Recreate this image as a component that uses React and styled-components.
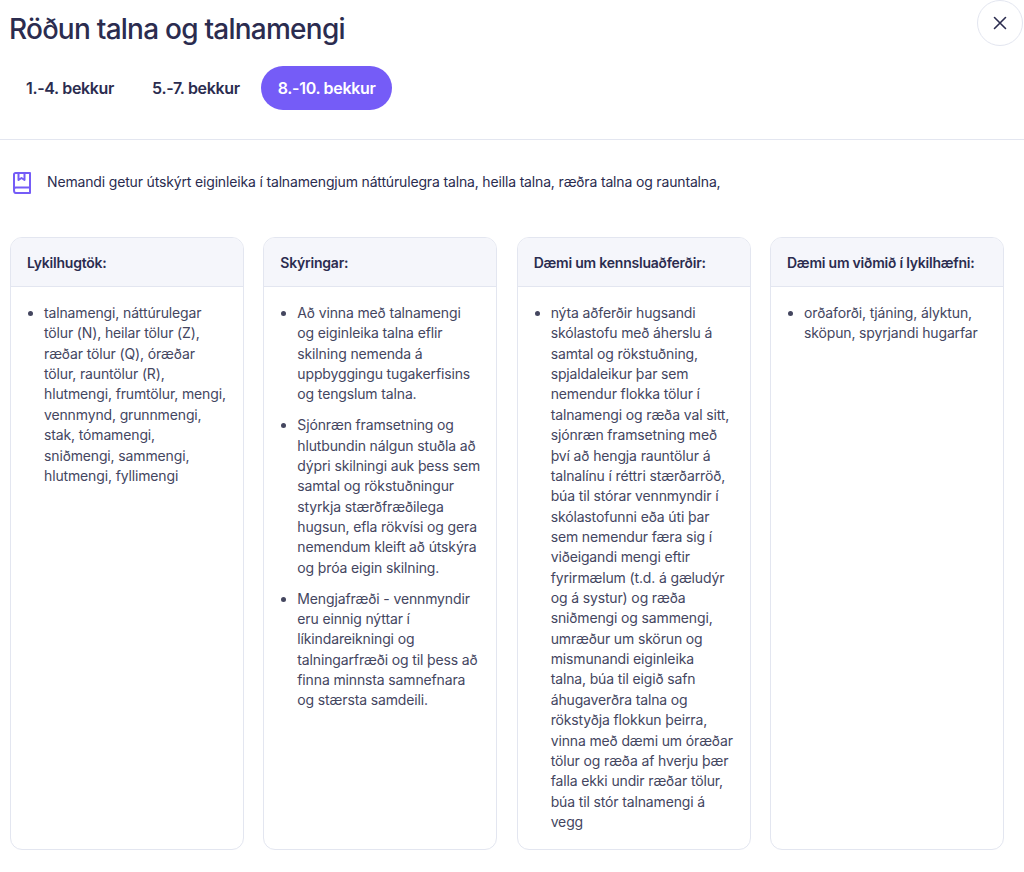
import React from 'react'
import styled, { createGlobalStyle } from 'styled-components'

const ink = '#2b2c4f'
const body = '#44465f'
const line = '#e3e6f0'
const purple = '#755cf7'

const GlobalStyle = createGlobalStyle`
    html, body { margin: 0; padding: 0; background: #fff; }
    body { font-family: Inter, "Liberation Sans", sans-serif; color: ${ink}; }
`

const Page = styled.div`
    width: 1024px;
    height: 872px;
    overflow: hidden;
    position: relative;
`

const Header = styled.header`
    height: 140px;
    padding: 11px 0 0 9px;
    box-sizing: border-box;
    border-bottom: 1px solid ${line};
`

const Title = styled.h1`
    margin: 0;
    font-size: 28px;
    line-height: 36px;
    font-weight: 500;
    letter-spacing: -0.76px;
    color: ${ink};
`

const Tabs = styled.div`
    display: flex;
    margin-top: 19px;
`

const Tab = styled.button`
    height: 44px;
    padding: 0 17px;
    margin-right: ${props => props.$active ? 0 : '4px'};
    border: 0;
    border-radius: 22px;
    font-family: Inter, sans-serif;
    font-size: 16px;
    font-weight: 600;
    letter-spacing: -0.33px;
    color: ${props => props.$active ? '#fff' : ink};
    background: ${props => props.$active ? purple : 'transparent'};
`

const CloseButton = styled.button`
    position: absolute;
    top: 0;
    left: 977px;
    width: 46px;
    height: 46px;
    display: flex;
    align-items: center;
    justify-content: center;
    padding: 0;
    border: 1px solid ${line};
    border-radius: 50%;
    background: #fff;
    color: ${ink};
`

const Intro = styled.div`
    display: flex;
    gap: 15px;
    padding: 29px 0 0 12px;
    font-size: 14px;
    line-height: 26px;
    letter-spacing: -0.16px;
    color: ${ink};
`

const IconBox = styled.svg`
    margin-top: 2px;
    flex: none;
`

const Columns = styled.div`
    display: grid;
    grid-template-columns: repeat(4, 234px);
    column-gap: 19.33px;
    padding: 42px 0 0 10px;
`

const Column = styled.section`
    height: 613px;
    box-sizing: border-box;
    border: 1px solid ${line};
    border-radius: 12px;
    overflow: hidden;
`

const ColumnTitle = styled.h2`
    margin: 0;
    height: 49px;
    box-sizing: border-box;
    padding: 0 16px;
    display: flex;
    align-items: center;
    font-size: 14px;
    font-weight: 600;
    letter-spacing: -0.22px;
    color: ${ink};
    background: #f5f6fb;
    border-bottom: 1px solid ${line};
`

const List = styled.ul`
    margin: 0;
    padding: 16px 16px 0 33px;
    font-size: 14px;
    line-height: 20.36px;
    letter-spacing: -0.14px;
    color: ${body};
`

const Item = styled.li`
    margin-bottom: 10.5px;
`

const columns = [
    {
        title: 'Lykilhugtök:',
        items: ['talnamengi, náttúrulegar tölur (N), heilar tölur (Z), ræðar tölur (Q), óræðar tölur, rauntölur (R), hlutmengi, frumtölur, mengi, vennmynd, grunnmengi, stak, tómamengi, sniðmengi, sammengi, hlutmengi, fyllimengi'],
    },
    {
        title: 'Skýringar:',
        items: [
            'Að vinna með talnamengi og eiginleika talna eflir skilning nemenda á uppbyggingu tugakerfisins og tengslum talna.',
            'Sjónræn framsetning og hlutbundin nálgun stuðla að dýpri skilningi auk þess sem samtal og rökstuðningur styrkja stærðfræðilega hugsun, efla rökvísi og gera nemendum kleift að útskýra og þróa eigin skilning.',
            'Mengjafræði - vennmyndir eru einnig nýttar í líkindareikningi og talningarfræði og til þess að finna minnsta samnefnara og stærsta samdeili.',
        ],
    },
    {
        title: 'Dæmi um kennsluaðferðir:',
        items: [
            <>nýta aðferðir hugsandi skólastofu með áherslu á samtal og rökstuðning, spjaldaleikur þar sem nemendur flokka tölur í talnamengi og ræða val sitt, sjónræn framsetning með því að hengja rauntölur á talnalínu í réttri stærðarröð, búa til stórar vennmyndir í skólastofunni eða úti þar sem nemendur færa sig í viðeigandi mengi eftir fyrirmælum (t.d. á gæludýr og á systur) og ræða sniðmengi og sammengi, umræður um skörun og mismunandi eiginleika<br />talna, búa til eigið safn áhugaverðra talna og rökstyðja flokkun þeirra, vinna með dæmi um óræðar tölur og ræða af hverju þær falla ekki undir ræðar tölur, búa til stór talnamengi á vegg</>,
        ],
    },
    {
        title: 'Dæmi um viðmið í lykilhæfni:',
        items: ['orðaforði, tjáning, ályktun, sköpun, spyrjandi hugarfar'],
    },
]

const tabs = ['1.-4. bekkur', '5.-7. bekkur', '8.-10. bekkur']

const BookIcon = () => (
    <IconBox width="20" height="24" viewBox="0 0 20 24" fill="none" stroke={purple} strokeWidth="2" strokeLinejoin="round" strokeLinecap="round">
        <path d="M2 19V3.5C2 2.7 2.7 2 3.5 2H18v14.5H3.7C2.7 16.5 2 17.4 2 19S2.7 22 3.7 22H18v-5.5" />
        <path d="M6.5 2v7l3-2 3 2V2" />
    </IconBox>
)

export default function App() {
    return (
        <Page>
            <GlobalStyle />
            <Header>
                <Title>Röðun talna og talnamengi</Title>
                <Tabs>
                    {tabs.map((tab, i) => <Tab key={tab} $active={i === 2}>{tab}</Tab>)}
                </Tabs>
            </Header>
            <CloseButton aria-label="Loka">
                <svg width="14" height="14" viewBox="0 0 14 14" fill="none" stroke="currentColor" strokeWidth="1.6" strokeLinecap="round">
                    <path d="M1.5 1.5l11 11M12.5 1.5l-11 11" />
                </svg>
            </CloseButton>
            <Intro>
                <BookIcon />
                <span>Nemandi getur útskýrt eiginleika í talnamengjum náttúrulegra talna, heilla talna, ræðra talna og rauntalna,</span>
            </Intro>
            <Columns>
                {columns.map(col => (
                    <Column key={col.title}>
                        <ColumnTitle>{col.title}</ColumnTitle>
                        <List>
                            {col.items.map((item, i) => <Item key={i}>{item}</Item>)}
                        </List>
                    </Column>
                ))}
            </Columns>
        </Page>
    )
}
